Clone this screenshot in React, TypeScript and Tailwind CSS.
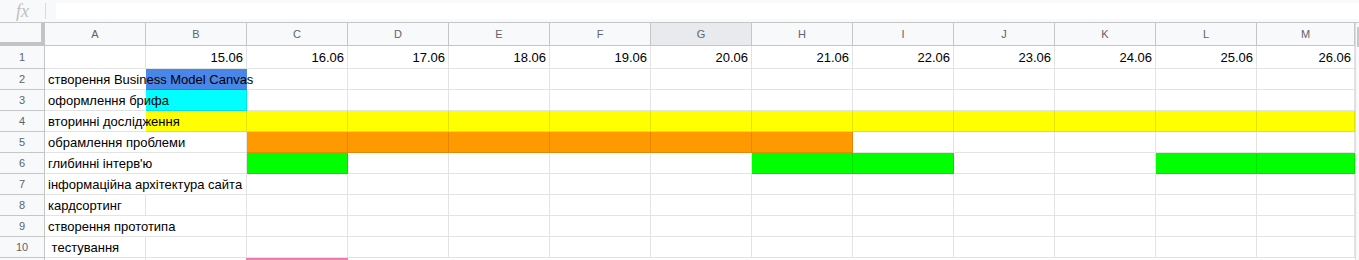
const cols = ["A", "B", "C", "D", "E", "F", "G", "H", "I", "J", "K", "L", "M"];
const dates = ["15.06", "16.06", "17.06", "18.06", "19.06", "20.06", "21.06", "22.06", "23.06", "24.06", "25.06", "26.06"];

// fill per row: column index (0 = A) -> colour
type Row = { label: string; overflow: boolean; fills: Record<number, string> };

const range = (from: number, to: number, color: string) => {
  const out: Record<number, string> = {};
  for (let i = from; i <= to; i++) out[i] = color;
  return out;
};

const rows: Row[] = [
  { label: "створення Business Model Canvas", overflow: true, fills: { 1: "bg-[#4a86e8]" } },
  { label: "оформлення брифа", overflow: true, fills: { 1: "bg-[#00ffff]" } },
  { label: "вторинні дослідження", overflow: true, fills: range(1, 12, "bg-[#ffff00]") },
  { label: "обрамлення проблеми", overflow: true, fills: range(2, 7, "bg-[#ff9900]") },
  {
    label: "глибинні інтерв'ю",
    overflow: true,
    fills: { 2: "bg-[#00ff00]", 7: "bg-[#00ff00]", 8: "bg-[#00ff00]", 11: "bg-[#00ff00]", 12: "bg-[#00ff00]" },
  },
  { label: "інформаційна архітектура сайта", overflow: true, fills: {} },
  { label: "кардсортинг", overflow: false, fills: {} },
  { label: "створення прототипа", overflow: true, fills: {} },
  { label: "\u00a0тестування", overflow: false, fills: {} },
];

const grid = "border-b border-r border-black/[0.11]";

function RowHeader({ n, tall }: { n?: number; tall?: boolean }) {
  return (
    <div
      className={`flex w-[45px] shrink-0 items-center justify-center border-b border-r border-[#c4c7c5] bg-[#f8f9fa] text-[11px] text-[#5f6368] ${
        tall ? "h-[23px]" : "h-[21px]"
      }`}
    >
      {n}
    </div>
  );
}

export default function App() {
  return (
    <div className="h-[260px] w-[1359px] overflow-hidden bg-white font-['Liberation_Sans',Arial,sans-serif] text-[13px] text-black">
      {/* formula bar */}
      <div className="flex h-[23px] items-center border-b border-[#c4c7c5] bg-[#f8f9fa]">
        <div className="flex w-[45px] items-center justify-center">
          <span className="font-['Liberation_Serif',serif] text-[18px] italic leading-none text-[#c0c0c0]">fx</span>
        </div>
        <div className="h-[16px] w-px bg-[#dadce0]" />
        <div className="ml-[10px] h-[16px] flex-1 bg-white" />
      </div>

      <div className="flex">
        <div className="w-[1355px] shrink-0">
          {/* column headers */}
          <div className="flex h-[23px]">
            <div className="h-[23px] w-[45px] shrink-0 border-b-4 border-r-4 border-[#c4c4c4] bg-[#f8f9fa]" />
            {cols.map((c, i) => (
              <div
                key={c}
                className={`flex h-[23px] shrink-0 items-center justify-center border-b border-r border-[#c4c7c5] text-[11px] text-[#5f6368] ${
                  i === 12 ? "w-[98px]" : "w-[101px]"
                } ${c === "G" ? "bg-[#e8eaed]" : "bg-[#f8f9fa]"}`}
              >
                {c}
              </div>
            ))}
          </div>

          {/* row 1 */}
          <div className="flex">
            <RowHeader n={1} tall />
            <div className={`h-[23px] w-[101px] shrink-0 ${grid}`} />
            {dates.map((d, i) => (
              <div
                key={d}
                className={`flex h-[23px] shrink-0 items-end justify-end pb-[2px] pr-[3px] leading-[17px] ${grid} ${
                  i === 11 ? "w-[98px]" : "w-[101px]"
                }`}
              >
                {d}
              </div>
            ))}
          </div>

          {/* rows 2..10 */}
          {rows.map((r, ri) => (
            <div key={ri} className="flex">
              <RowHeader n={ri + 2} />
              <div
                className={`relative z-10 flex h-[21px] w-[101px] shrink-0 items-end whitespace-nowrap pb-[1px] pl-[3px] leading-[17px] ${grid} ${
                  r.overflow ? "border-r-transparent" : ""
                }`}
              >
                {r.label}
              </div>
              {cols.slice(1).map((c, ci) => {
                const idx = ci + 1;
                const fill = r.fills[idx] ?? "";
                const hideLine = ri === 0 && idx === 1;
                return (
                  <div
                    key={c}
                    className={`h-[21px] shrink-0 ${grid} ${fill} ${idx === 12 ? "w-[98px]" : "w-[101px]"} ${
                      hideLine ? "border-r-transparent" : ""
                    }`}
                  />
                );
              })}
            </div>
          ))}

          {/* row 11, only its top edge is in view */}
          <div className="flex">
            <RowHeader />
            <div className="h-[21px] w-[101px] shrink-0 border-r border-black/[0.11]" />
            <div className="h-[21px] w-[101px] shrink-0 border-r border-black/[0.11]" />
            <div className="h-[21px] w-[102px] shrink-0 -ml-px border-x-2 border-t-2 border-[#ee7dad]" />
          </div>
        </div>

        {/* scrollbar strip */}
        <div className="relative h-[237px] flex-1 border-l border-[#dadce0] bg-[#f8f9fa]">
          <div className="absolute left-[1px] top-[4px] h-[20px] w-[2px] bg-[#c8c8c8]" />
        </div>
      </div>
    </div>
  );
}
